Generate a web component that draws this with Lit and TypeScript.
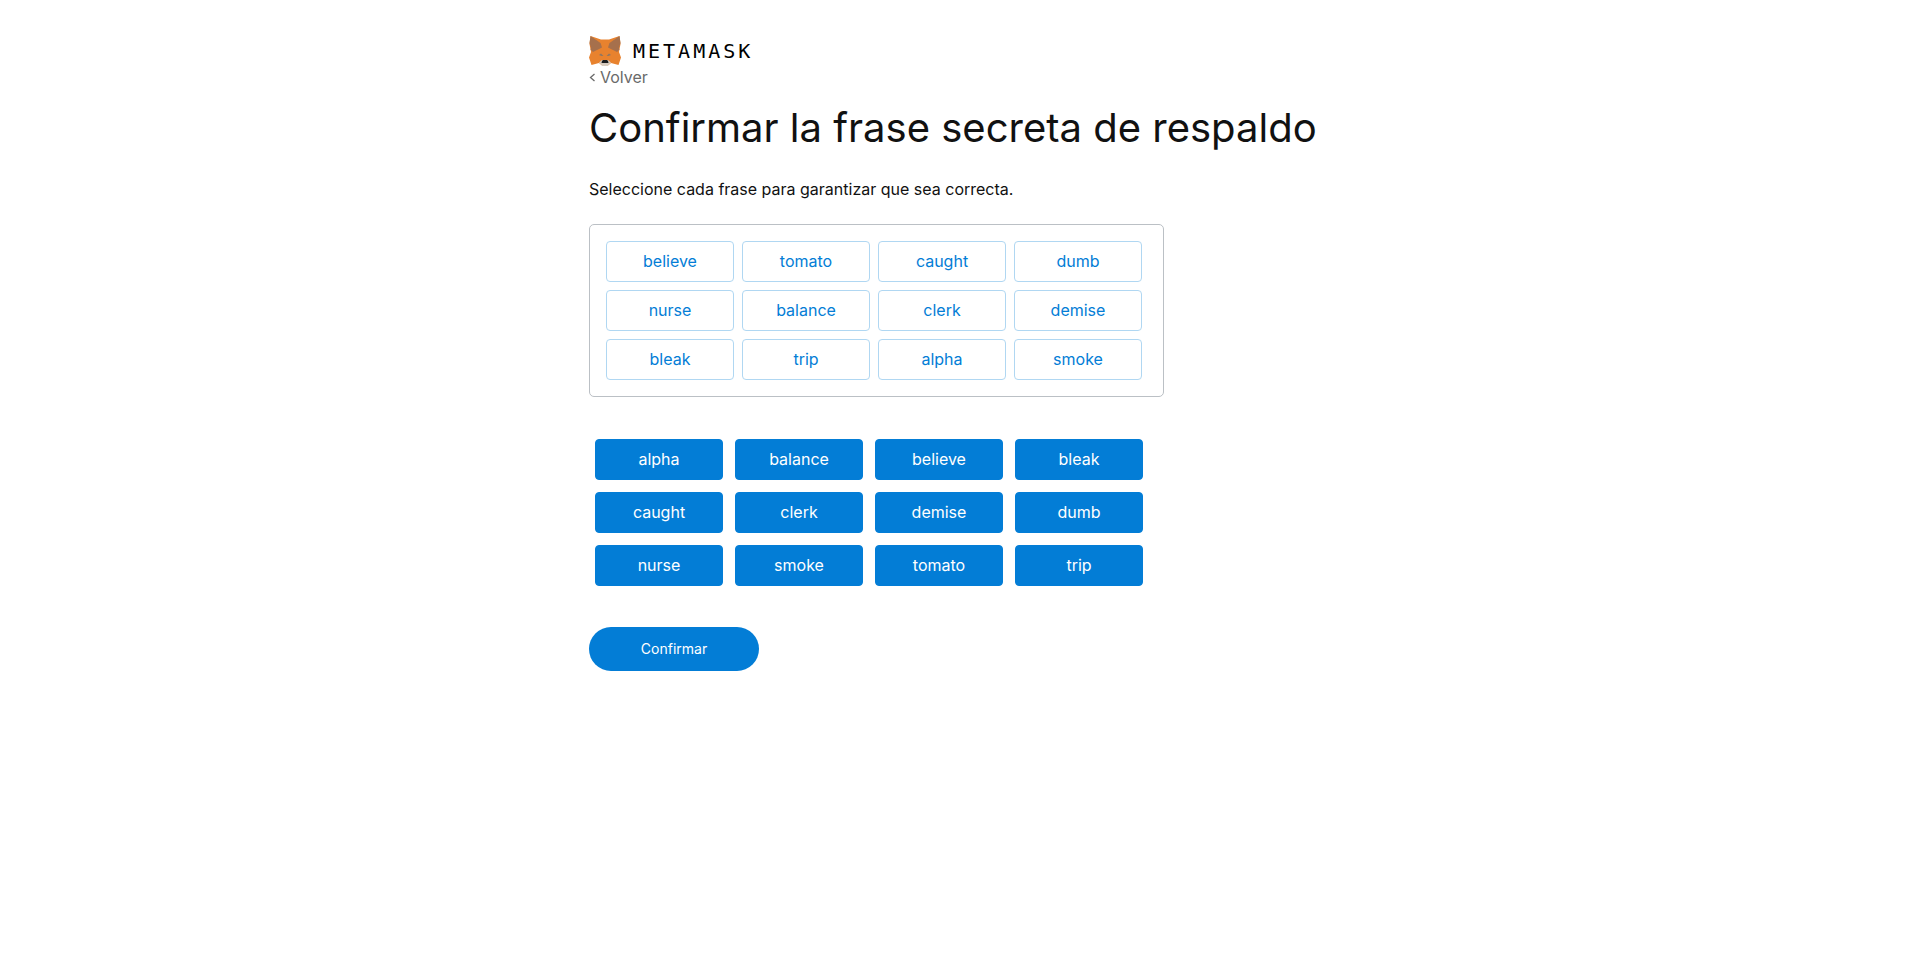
import { LitElement, html, css } from "lit";
import { customElement, state } from "lit/decorators.js";

const PHRASE = [
  "believe", "tomato", "caught", "dumb",
  "nurse", "balance", "clerk", "demise",
  "bleak", "trip", "alpha", "smoke",
];

@customElement("metamask-logo")
class MetamaskLogo extends LitElement {
  static styles = css`
    :host {
      display: flex;
      align-items: center;
      gap: 10px;
      height: 32px;
    }
    .fox {
      display: block;
      width: 34px;
      height: 32px;
    }
    .wordmark {
      font: 400 20px/32px "DejaVu Sans Mono", monospace;
      letter-spacing: 3px;
      color: #000;
    }
  `;

  render() {
    return html`
      <svg class="fox" viewBox="1 0 34 32" aria-hidden="true">
        <path fill="#e8822e" d="M2.5 1 13 4.5h8L31.500 1 32.500 9l-1.500 8 2 5.500-2.500 7.500-7.500-2-3 2.500h-6L11 28l-7.500 2L1 22.500 3 17 1.500 9z" />
        <path fill="#a6704c" d="M2.500 1 12.500 8 14 12.500 5 17 2.500 14.500 3 13 1.500 8zM31.500 1 21.500 8 20 12.500 29 17 31.500 14.500 31 13 32.500 8z" />
        <path fill="#8f7763" d="m11 20 2-1.500 2.500 2.500h-2zM23 20l-2-1.500-2.500 2.500h2z" />
        <path fill="#d5cabe" d="m11 27.500 3-2.500h6l3 2.500-3.500 3.500h-5z" />
        <path fill="#191b1d" d="m14 26 1-1h4l1 1 .5 2h-7z" />
      </svg>
      <span class="wordmark">METAMASK</span>
    `;
  }
}

@customElement("app-root")
class AppRoot extends LitElement {
  static styles = css`
    :host {
      display: block;
      min-height: 100vh;
      background: #fff;
      color: #111;
      font: 400 16px/22px Inter, "Open Sans", sans-serif;
    }
    .page {
      box-sizing: border-box;
      width: 742px;
      max-width: 100%;
      margin: 0 auto;
      padding-top: 35px;
    }
    .back {
      display: flex;
      align-items: center;
      gap: 4px;
      width: max-content;
      margin: -1px 0 0;
      color: #6a6a6a;
      text-decoration: none;
    }
    .chevron {
      display: block;
      width: 7px;
      height: 10px;
    }
    .title {
      margin: 11px 0 0;
      font-size: 40px;
      font-weight: 400;
      line-height: 58px;
    }
    .description {
      margin: 21px 0 0;
      line-height: 22px;
    }
    .sorted {
      box-sizing: border-box;
      display: flex;
      flex-wrap: wrap;
      gap: 8px;
      max-width: 575px;
      margin-top: 24px;
      padding: 16px;
      border: 1px solid #bbc0c5;
      border-radius: 5px;
    }
    .choices {
      display: flex;
      flex-wrap: wrap;
      gap: 12px;
      max-width: 575px;
      margin: 42px 0 0;
      padding-left: 6px;
      box-sizing: border-box;
    }
    .word {
      box-sizing: border-box;
      width: 128px;
      height: 41px;
      padding: 0 8px 2px;
      border: 1px solid #b0d7f2;
      border-radius: 4px;
      background: #fff;
      color: #037dd6;
      font: inherit;
      cursor: pointer;
    }
    .selected {
      border-color: #037dd6;
      background: #037dd6;
      color: #fff;
    }
    .confirm {
      display: block;
      width: 170px;
      height: 44px;
      margin-top: 41px;
      padding: 0;
      border: 0;
      border-radius: 22px;
      background: #037dd6;
      color: #fff;
      font: inherit;
      font-size: 14px;
      cursor: pointer;
    }
  `;

  @state() private picked: string[] = [...PHRASE];

  private toggle(word: string) {
    this.picked = this.picked.includes(word)
      ? this.picked.filter((w) => w !== word)
      : [...this.picked, word];
  }

  render() {
    return html`
      <main class="page">
        <metamask-logo></metamask-logo>
        <a class="back" href="#">
          <svg class="chevron" viewBox="0 0 7 10" aria-hidden="true">
            <path d="M5.500 2 1.500 5.500l4 3.500" fill="none" stroke="currentColor" stroke-width="1.300" />
          </svg>
          Volver
        </a>
        <h1 class="title">Confirmar la frase secreta de respaldo</h1>
        <p class="description">Seleccione cada frase para garantizar que sea correcta.</p>
        <div class="sorted">
          ${this.picked.map(
            (w) => html`<button class="word" @click=${() => this.toggle(w)}>${w}</button>`,
          )}
        </div>
        <div class="choices">
          ${[...PHRASE].sort().map(
            (w) => html`<button
              class="word ${this.picked.includes(w) ? "selected" : ""}"
              @click=${() => this.toggle(w)}
            >${w}</button>`,
          )}
        </div>
        <button class="confirm">Confirmar</button>
      </main>
    `;
  }
}
